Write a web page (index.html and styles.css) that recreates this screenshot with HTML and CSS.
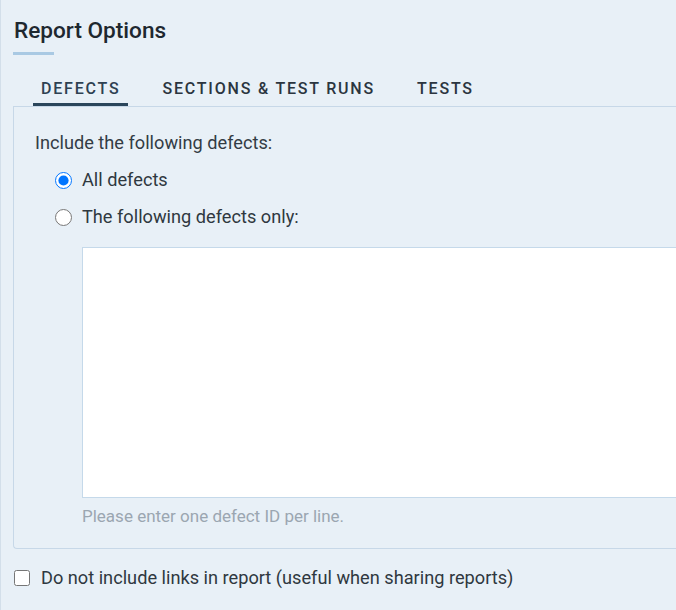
FILE: index.html
```html
<!DOCTYPE html>
<html lang="en">
<head>
<meta charset="utf-8">
<title>Report Options</title>
<link rel="stylesheet" href="styles.css">
</head>
<body>
<div class="page">
  <h2 class="title">Report Options</h2>
  <div class="title-bar"></div>
  <ul class="tabs">
    <li class="tab active">DEFECTS</li>
    <li class="tab">SECTIONS &amp; TEST RUNS</li>
    <li class="tab">TESTS</li>
  </ul>
  <div class="panel">
    <p class="lead">Include the following defects:</p>
    <label class="option"><input type="radio" name="defects" checked><span>All defects</span></label>
    <label class="option"><input type="radio" name="defects"><span>The following defects only:</span></label>
    <textarea class="ids"></textarea>
    <p class="hint">Please enter one defect ID per line.</p>
  </div>
  <label class="check"><input type="checkbox"><span>Do not include links in report (useful when sharing reports)</span></label>
</div>
</body>
</html>
```

FILE: styles.css
```css
html, body {
  margin: 0;
  padding: 0;
  height: 100%;
}
body {
  background: #e8f0f7;
  font-family: Roboto, "Liberation Sans", sans-serif;
  color: #333c45;
  overflow: hidden;
}
.page {
  border-left: 1px solid #d3dfea;
  min-height: 100%;
  box-sizing: border-box;
  padding: 19px 0 0 12px;
}
.title {
  margin: 0 0 0 1px;
  font-size: 22.6px;
  line-height: 24px;
  font-weight: 500;
  color: #1e2830;
}
.title-bar {
  width: 41px;
  height: 3px;
  background: #a9c9e3;
  margin-top: 9px;
}
.tabs {
  list-style: none;
  margin: 24px 0 0 20px;
  padding: 0;
  display: flex;
  gap: 26px;
}
.tab {
  padding: 0 8px 4px;
  font-size: 16px;
  line-height: 20px;
  font-weight: 500;
  letter-spacing: 1.8px;
  color: #2b3540;
  border-bottom: 3px solid transparent;
}
.tab.active {
  color: #2e4152;
  border-bottom-color: #2b465b;
}
.panel {
  border: 1px solid #c7d8e8;
  border-right: none;
  border-radius: 0 0 0 4px;
  margin-right: -20px;
  padding: 25px 0 22px 21px;
}
.lead {
  margin: 0;
  font-size: 18.2px;
  line-height: 22px;
}
.option {
  display: flex;
  align-items: center;
  margin: 15px 0 0 20px;
  font-size: 18.2px;
  line-height: 22px;
  color: #2f3840;
}
.option input {
  width: 17px;
  height: 17px;
  margin: 0 10px 0 0;
}
.ids {
  display: block;
  box-sizing: border-box;
  margin: 19px 0 0 47px;
  width: 700px;
  height: 251px;
  border: 1px solid #c5d9ea;
  background: #fff;
  resize: none;
}
.hint {
  margin: 8px 0 0 47px;
  font-size: 17px;
  line-height: 20px;
  color: #9ba6b1;
}
.check {
  display: flex;
  align-items: center;
  margin-top: 18px;
  font-size: 18.2px;
  line-height: 22px;
  color: #2f3840;
}
.check input {
  width: 16px;
  height: 16px;
  margin: 0 11px 0 1px;
}
```
